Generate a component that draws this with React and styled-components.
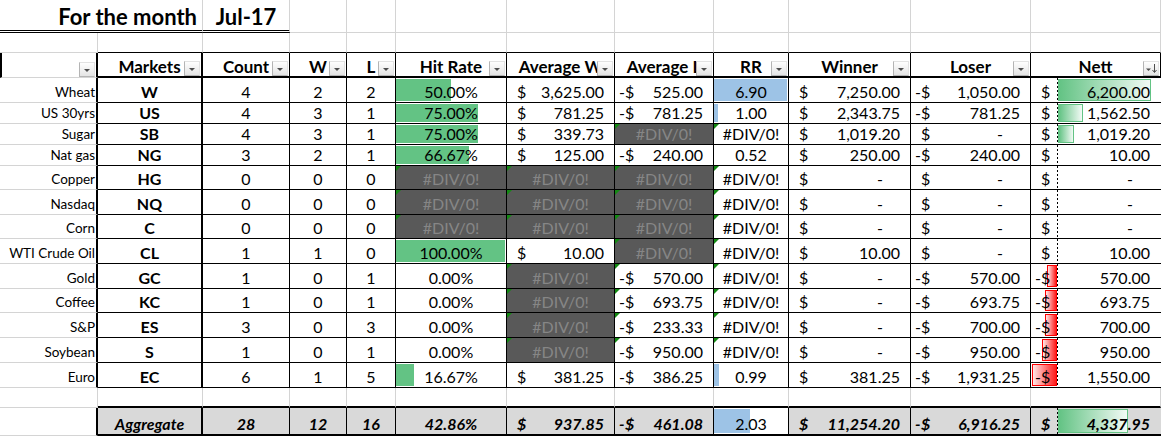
import React from "react";
import styled, { createGlobalStyle, css } from "styled-components";

const GlobalStyle = createGlobalStyle`
  html, body {
    margin: 0;
    padding: 0;
    background: #fff;
  }
  body {
    font-family: Lato, "Liberation Sans", sans-serif;
    color: #000;
  }
`;

const COLS = "98px 105px 87px 57px 49px 111px 108px 99px 75px 122px 120px 130px";
const GRID = "1px solid #d4d4d4";
const THIN = "1px solid #000";
const MED = "2px solid #000";
const GREEN = "#63c384";
const BLUE = "#9dc3e6";
const TOTAL_BG = "#d9d9d9";

const Sheet = styled.div`
  width: 1161px;
  overflow: hidden;
`;

const Row = styled.div`
  display: grid;
  grid-template-columns: ${COLS};
  height: ${(p) => p.$h}px;
`;

const TotalRow = styled(Row)`
  & > div:not(:first-child) {
    border-bottom: ${MED};
  }
`;

const Cell = styled.div`
  position: relative;
  box-sizing: border-box;
  display: flex;
  align-items: flex-end;
  justify-content: center;
  min-width: 0;
  overflow: hidden;
  white-space: nowrap;
  padding-bottom: 1px;
  font-size: 16px;
  line-height: 19px;
  border-right: ${(p) => (p.$thick ? MED : THIN)};
  border-bottom: ${THIN};
  background: ${(p) => p.$bg || "#fff"};
  ${(p) =>
    p.$total &&
    css`
      font-weight: 700;
      font-style: italic;
      background: ${TOTAL_BG};
    `}
`;

const GapCell = styled(Cell)`
  border-right: ${GRID};
  border-bottom: ${(p) => p.$edge || GRID};
`;

const TitleCell = styled(Cell)`
  grid-column: span 2;
  justify-content: flex-end;
  padding: 0 5px 0 0;
  font-size: 22px;
  font-weight: 700;
  line-height: 26px;
  border-right: ${GRID};
  border-bottom: 3px double #000;
`;

const MonthCell = styled(TitleCell)`
  grid-column: span 1;
  justify-content: center;
  padding: 0;
`;

const HeadCell = styled(Cell)`
  padding-bottom: 0;
  font-size: 17px;
  font-weight: 700;
  border-bottom: ${MED};
`;

const CornerCell = styled(HeadCell)`
  border-left: ${MED};
  border-right: ${MED};
  border-bottom: ${GRID};
`;

const LabelCell = styled(Cell)`
  justify-content: flex-end;
  padding: 0 1px 2px 0;
  font-size: 13.5px;
  line-height: 16px;
  border-right: ${MED};
  border-bottom: ${GRID};
`;

const CodeCell = styled(Cell)`
  font-weight: 700;
`;

const ErrCell = styled(Cell)`
  background: ${(p) => (p.$dark ? "#595959" : "#fff")};
  color: ${(p) => (p.$dark ? "#868686" : "#000")};
`;

const MoneyCell = styled(Cell)`
  justify-content: space-between;
  padding-left: 4px;
  padding-right: 10px;
`;

const NettCell = styled(MoneyCell)`
  border-right: none;
  padding-right: 11px;
`;

const Val = styled.span`
  position: relative;
`;

const Cur = styled.span`
  position: relative;
  display: flex;
`;

const Sign = styled.span`
  display: inline-block;
  width: 6px;
`;

const Dash = styled.span`
  position: relative;
  margin-right: 17px;
`;

const Bar = styled.span`
  position: absolute;
  top: 1px;
  bottom: 1px;
  left: 0;
  background: ${(p) => p.$color};
`;

const NettBar = styled.span`
  position: absolute;
  top: 1px;
  bottom: 1px;
  box-sizing: border-box;
  ${(p) =>
    p.$neg
      ? css`
          right: calc(100% - 26px);
          border: 1px solid #ff0000;
          background: linear-gradient(to left, #ff1a1a, #ffe6e6);
        `
      : css`
          left: 27px;
          border: 1px solid ${GREEN};
          background: linear-gradient(to right, ${GREEN}, #f2faf5);
        `}
`;

const Axis = styled.span`
  position: absolute;
  top: 0;
  bottom: 0;
  left: 26px;
  width: 1px;
  background: repeating-linear-gradient(to bottom, #000 0 2px, transparent 2px 4px);
`;

const ErrorMark = styled.span`
  position: absolute;
  top: 0;
  left: 0;
  width: 0;
  height: 0;
  border-top: 5px solid #138a13;
  border-right: 5px solid transparent;
`;

const FilterBox = styled.span`
  position: absolute;
  right: 1px;
  bottom: 0;
  width: 16px;
  height: 15px;
  box-sizing: border-box;
  border: 1px solid #e2e2e2;
  border-left-color: #b4b4b4;
  border-bottom-color: #b4b4b4;
  background: linear-gradient(#fefefe, #e4e4e4);
  display: flex;
  align-items: center;
  justify-content: center;
`;

function Filter({ sorted }) {
  return (
    <FilterBox>
      <svg width="14" height="13" viewBox="0 0 14 13">
        {sorted ? (
          <>
            <path d="M2 6.5h5l-2.5 2.5z" fill="#4d4d4d" />
            <path d="M10.5 2v8" stroke="#4d4d4d" strokeWidth="1" />
            <path d="M8.5 8l2 2.5 2-2.5" stroke="#4d4d4d" strokeWidth="1" fill="none" />
          </>
        ) : (
          <path d="M4 6h6l-3 3z" fill="#4d4d4d" />
        )}
      </svg>
    </FilterBox>
  );
}

const fmt = (v) => {
  const [i, d] = Math.abs(v).toFixed(2).split(".");
  return i.replace(/\B(?=(\d{3})+(?!\d))/g, ",") + "." + d;
};

const pct = (v) => (v * 100).toFixed(2) + "%";

function Money({ value }) {
  return (
    <>
      <Cur>
        <Sign>{value < 0 ? "-" : ""}</Sign>$
      </Cur>
      {value === 0 ? <Dash>-</Dash> : <Val>{fmt(value)}</Val>}
    </>
  );
}

function DivError({ dark }) {
  return (
    <ErrCell $dark={dark}>
      <ErrorMark />
      <Val>#DIV/0!</Val>
    </ErrCell>
  );
}

const headers = [
  "Markets", "Count", "W", "L", "Hit Rate", "Average W", "Average L",
  "RR", "Winner", "Loser", "Nett",
];

const empty = { count: 0, w: 0, l: 0, hit: null, avgW: null, avgL: null, rr: null, win: 0, lose: 0, nett: 0 };

const markets = [
  { h: 25, label: "Wheat", code: "W", count: 4, w: 2, l: 2, hit: 0.5, avgW: 3625, avgL: -525, rr: "6.90", rrBar: 73, win: 7250, lose: -1050, nett: 6200, nettBar: 93 },
  { h: 21, label: "US 30yrs", code: "US", count: 4, w: 3, l: 1, hit: 0.75, avgW: 781.25, avgL: -781.25, rr: "1.00", rrBar: 4, win: 2343.75, lose: -781.25, nett: 1562.5, nettBar: 25 },
  { h: 21, label: "Sugar", code: "SB", count: 4, w: 3, l: 1, hit: 0.75, avgW: 339.73, avgL: null, rr: null, win: 1019.2, lose: 0, nett: 1019.2, nettBar: 16 },
  { h: 21, label: "Nat gas", code: "NG", count: 3, w: 2, l: 1, hit: 0.6667, avgW: 125, avgL: -240, rr: "0.52", rrBar: 0, win: 250, lose: -240, nett: 10, nettBar: 0 },
  { h: 24, label: "Copper", code: "HG", ...empty },
  { h: 25, label: "Nasdaq", code: "NQ", ...empty },
  { h: 24, label: "Corn", code: "C", ...empty },
  { h: 25, label: "WTI Crude Oil", code: "CL", count: 1, w: 1, l: 0, hit: 1, avgW: 10, avgL: null, rr: null, win: 10, lose: 0, nett: 10, nettBar: 0 },
  { h: 25, label: "Gold", code: "GC", count: 1, w: 0, l: 1, hit: 0, avgW: null, avgL: -570, rr: null, win: 0, lose: -570, nett: -570, nettBar: 10 },
  { h: 24, label: "Coffee", code: "KC", count: 1, w: 0, l: 1, hit: 0, avgW: null, avgL: -693.75, rr: null, win: 0, lose: -693.75, nett: -693.75, nettBar: 12 },
  { h: 25, label: "S&P", code: "ES", count: 3, w: 0, l: 3, hit: 0, avgW: null, avgL: -233.33, rr: null, win: 0, lose: -700, nett: -700, nettBar: 12 },
  { h: 25, label: "Soybean", code: "S", count: 1, w: 0, l: 1, hit: 0, avgW: null, avgL: -950, rr: null, win: 0, lose: -950, nett: -950, nettBar: 15 },
  { h: 25, label: "Euro", code: "EC", count: 6, w: 1, l: 5, hit: 0.1667, avgW: 381.25, avgL: -386.25, rr: "0.99", rrBar: 5, win: 381.25, lose: -1931.25, nett: -1550, nettBar: 25 },
];

function Nett({ value, bar, total }) {
  return (
    <NettCell $total={total}>
      {bar > 0 && <NettBar $neg={value < 0} style={{ width: bar }} />}
      <Axis />
      <Money value={value} />
    </NettCell>
  );
}

function MarketRow({ m }) {
  return (
    <Row $h={m.h}>
      <LabelCell>{m.label}</LabelCell>
      <CodeCell $thick>{m.code}</CodeCell>
      <Cell>{m.count}</Cell>
      <Cell>{m.w}</Cell>
      <Cell>{m.l}</Cell>
      {m.hit === null ? (
        <DivError dark />
      ) : (
        <Cell>
          {m.hit > 0 && <Bar $color={GREEN} style={{ width: m.hit * 109 }} />}
          <Val>{pct(m.hit)}</Val>
        </Cell>
      )}
      {m.avgW === null ? (
        <DivError dark />
      ) : (
        <MoneyCell>
          <Money value={m.avgW} />
        </MoneyCell>
      )}
      {m.avgL === null ? (
        <DivError dark />
      ) : (
        <MoneyCell>
          {m.avgW === null && <ErrorMark />}
          <Money value={m.avgL} />
        </MoneyCell>
      )}
      {m.rr === null ? (
        <DivError />
      ) : (
        <Cell>
          {m.rrBar > 0 && <Bar $color={BLUE} style={{ width: m.rrBar }} />}
          <Val>{m.rr}</Val>
        </Cell>
      )}
      <MoneyCell>
        <Money value={m.win} />
      </MoneyCell>
      <MoneyCell>
        <Money value={m.lose} />
      </MoneyCell>
      <Nett value={m.nett} bar={m.nettBar} />
    </Row>
  );
}

const blanks = (n, edge) =>
  Array.from({ length: n }, (_, i) => <GapCell key={i} $edge={edge} />);

export default function App() {
  return (
    <>
      <GlobalStyle />
      <Sheet>
        <Row $h={33}>
          <TitleCell>For the month</TitleCell>
          <MonthCell>Jul-17</MonthCell>
          {blanks(9)}
        </Row>
        <Row $h={20}>
          <GapCell />
          {blanks(11, THIN)}
        </Row>
        <Row $h={25}>
          <CornerCell>
            <Filter />
          </CornerCell>
          {headers.map((h) => (
            <HeadCell key={h} $thick={h === "Markets"}>
              {h}
              <Filter sorted={h === "Nett"} />
            </HeadCell>
          ))}
        </Row>
        {markets.map((m) => (
          <MarketRow key={m.code} m={m} />
        ))}
        <Row $h={20}>
          <GapCell />
          {blanks(11, MED)}
        </Row>
        <TotalRow $h={28}>
          <LabelCell />
          <CodeCell $thick $total>Aggregate</CodeCell>
          <Cell $total>28</Cell>
          <Cell $total>12</Cell>
          <Cell $total>16</Cell>
          <Cell $total>42.86%</Cell>
          <MoneyCell $total>
            <Money value={937.85} />
          </MoneyCell>
          <MoneyCell $total>
            <Money value={-461.08} />
          </MoneyCell>
          <Cell>
            <Bar $color={BLUE} style={{ width: 36 }} />
            <Val>2.03</Val>
          </Cell>
          <MoneyCell $total>
            <Money value={11254.2} />
          </MoneyCell>
          <MoneyCell $total>
            <Money value={-6916.25} />
          </MoneyCell>
          <Nett value={4337.95} bar={70} total />
        </TotalRow>
      </Sheet>
    </>
  );
}
